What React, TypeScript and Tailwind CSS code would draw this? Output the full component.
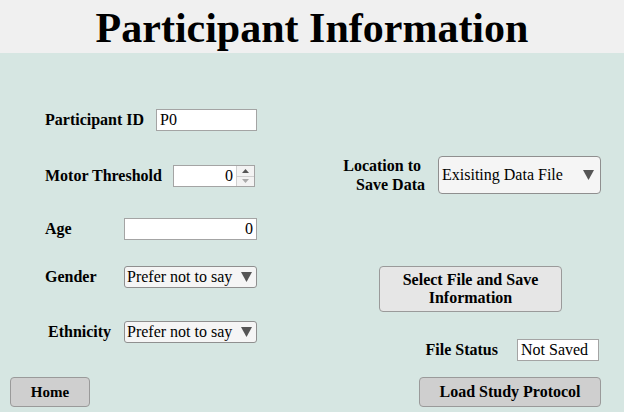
import React from 'react';

const serif = "font-['Liberation_Serif','Times_New_Roman',serif]";

function Caret() {
  return (
    <svg width="11" height="10" viewBox="0 0 11 10" className="shrink-0">
      <path d="M0 0 H11 L5.5 10 Z" fill="#555" />
    </svg>
  );
}

function TextBox({ value, align = 'left', width }: { value: string; align?: 'left' | 'right'; width: string }) {
  return (
    <div
      className={`${width} h-[22px] bg-white border border-[#a4a4a4] flex items-center px-[3px] text-[16px] leading-none text-black ${
        align === 'right' ? 'justify-end' : 'justify-start'
      }`}
    >
      {value}
    </div>
  );
}

function SelectBox({ value }: { value: string }) {
  return (
    <div className="w-[133px] h-[22px] bg-[#f5f5f5] border border-[#8f8f8f] rounded-[3px] flex items-center justify-between pl-[2px] pr-[4px] text-[16px] leading-none text-black">
      <span>{value}</span>
      <Caret />
    </div>
  );
}

export default function App() {
  return (
    <div className={`w-[624px] h-[412px] overflow-hidden ${serif} text-black`}>
      {/* Header */}
      <div className="h-[53px] bg-[#f0f0f0] flex justify-center">
        <h1 className="text-[42px] font-bold leading-none mt-[7px]">Participant Information</h1>
      </div>

      {/* Body */}
      <div className="h-[359px] bg-[#d6e6e2] flex flex-col">
        <div className="flex flex-1">
          {/* Left column */}
          <div className="w-[341px] pl-[45px] flex flex-col text-[16px] font-bold">
            <div className="mt-[56px] h-[22px] flex items-center">
              <span className="w-[111px]">Participant ID</span>
              <div className="font-normal">
                <TextBox value="P0" width="w-[101px]" />
              </div>
            </div>

            <div className="mt-[34px] h-[22px] flex items-center">
              <span className="w-[128px]">Motor Threshold</span>
              <div className="w-[82px] h-[22px] bg-white border border-[#a4a4a4] flex font-normal">
                <div className="flex-1 flex items-center justify-end pr-[3px] leading-none">0</div>
                <div className="w-[18px] border-l border-[#d0d0d0] flex flex-col bg-[#f3f3f3]">
                  <div className="flex-1 flex items-center justify-center border-b border-[#d0d0d0]">
                    <svg width="7" height="4" viewBox="0 0 7 4"><path d="M0 4 L3.5 0 L7 4 Z" fill="#555" /></svg>
                  </div>
                  <div className="flex-1 flex items-center justify-center">
                    <svg width="7" height="4" viewBox="0 0 7 4"><path d="M0 0 L3.5 4 L7 0 Z" fill="#aaa" /></svg>
                  </div>
                </div>
              </div>
            </div>

            <div className="mt-[31px] h-[22px] flex items-center">
              <span className="w-[79px]">Age</span>
              <div className="font-normal">
                <TextBox value="0" align="right" width="w-[133px]" />
              </div>
            </div>

            <div className="mt-[26px] h-[22px] flex items-center">
              <span className="w-[79px]">Gender</span>
              <div className="font-normal">
                <SelectBox value="Prefer not to say" />
              </div>
            </div>

            <div className="mt-[33px] h-[22px] flex items-center">
              <span className="w-[79px] pl-[3px]">Ethnicity</span>
              <div className="font-normal">
                <SelectBox value="Prefer not to say" />
              </div>
            </div>
          </div>

          {/* Right column */}
          <div className="w-[260px] flex flex-col text-[16px] font-bold">
            <div className="mt-[103px] flex items-center">
              <div className="w-[84px] text-right leading-[19px] whitespace-nowrap">
                <div className="pr-[4px]">Location to</div>
                <div>Save Data</div>
              </div>
              <div className="ml-[13px] w-[163px] h-[38px] bg-[#f5f5f5] border border-[#8f8f8f] rounded-[4px] flex items-center justify-between pl-[3px] pr-[6px] font-normal leading-none">
                <span>Exisiting Data File</span>
                <Caret />
              </div>
            </div>

            <div className="mt-[72px] ml-[38px] w-[183px] h-[46px] bg-[#e6e6e6] border border-[#9a9a9a] rounded-[4px] flex items-center justify-center text-center leading-[18px]">
              Select File and Save
              <br />
              Information
            </div>

            <div className="mt-[26px] flex items-center justify-end pr-[2px]">
              <span>File Status</span>
              <div className="ml-[19px] font-normal">
                <TextBox value="Not Saved" width="w-[82px]" />
              </div>
            </div>
          </div>
        </div>

        {/* Bottom buttons */}
        <div className="flex justify-between pl-[10px] pr-[23px] pb-[5px] text-[16px] font-bold">
          <div className="w-[80px] h-[30px] bg-[#cfcfcf] border border-[#9a9a9a] rounded-[4px] flex items-center justify-center text-[15px]">
            Home
          </div>
          <div className="w-[182px] h-[30px] bg-[#cfcfcf] border border-[#9a9a9a] rounded-[4px] flex items-center justify-center">
            Load Study Protocol
          </div>
        </div>
      </div>
    </div>
  );
}
